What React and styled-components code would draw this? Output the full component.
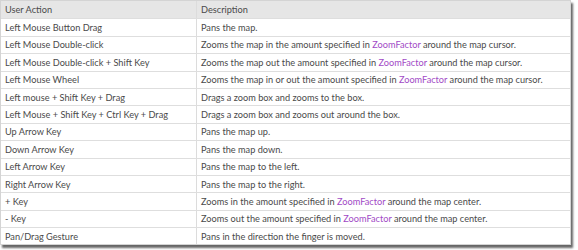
import React from "react";
import styled, { createGlobalStyle } from "styled-components";

const GlobalStyle = createGlobalStyle`
  html, body {
    margin: 0;
    padding: 0;
    background: #ffffff;
  }
`;

const Page = styled.div`
  width: 578px;
  height: 250px;
  overflow: hidden;
`;

const Table = styled.div`
  width: 571px;
  display: flex;
  flex-direction: column;
  border: 1px solid #d4d4d4;
  box-sizing: border-box;
  box-shadow: 2px 3px 2px rgba(0, 0, 0, 0.6);
  font-family: "Lato", "Open Sans", sans-serif;
  font-size: 9.2px;
  color: #4a4a4a;
`;

const Row = styled.div`
  display: grid;
  grid-template-columns: 195px 1fr;
  height: 17.4px;
  box-sizing: border-box;
  background: ${(p) => (p.head ? "#e6e6e6" : "#ffffff")};
  border-top: ${(p) => (p.first ? "none" : "1px solid #dedede")};
`;

const Cell = styled.div`
  display: flex;
  align-items: center;
  padding-left: 4px;
  white-space: nowrap;
  border-left: ${(p) => (p.right ? "1px solid #dcdcdc" : "none")};
`;

const Link = styled.span`
  color: #a24ac6;
`;

const rows = [
  ["Left Mouse Button Drag", "Pans the map."],
  ["Left Mouse Double-click", ["Zooms the map in the amount specified in ", " around the map cursor."]],
  ["Left Mouse Double-click + Shift Key", ["Zooms the map out the amount specified in ", " around the map cursor."]],
  ["Left Mouse Wheel", ["Zooms the map in or out the amount specified in ", " around the map cursor."]],
  ["Left mouse + Shift Key + Drag", "Drags a zoom box and zooms to the box."],
  ["Left Mouse + Shift Key + Ctrl Key + Drag", "Drags a zoom box and zooms out around the box."],
  ["Up Arrow Key", "Pans the map up."],
  ["Down Arrow Key", "Pans the map down."],
  ["Left Arrow Key", "Pans the map to the left."],
  ["Right Arrow Key", "Pans the map to the right."],
  ["+ Key", ["Zooms in the amount specified in ", " around the map center."]],
  ["- Key", ["Zooms out the amount specified in ", " around the map center."]],
  ["Pan/Drag Gesture", "Pans in the direction the finger is moved."],
];

const Description = ({ value }) =>
  Array.isArray(value) ? (
    <span>
      {value[0]}
      <Link>ZoomFactor</Link>
      {value[1]}
    </span>
  ) : (
    <span>{value}</span>
  );

export default function App() {
  return (
    <Page>
      <GlobalStyle />
      <Table>
        <Row head first>
          <Cell>User Action</Cell>
          <Cell right>Description</Cell>
        </Row>
        {rows.map(([action, desc]) => (
          <Row key={action}>
            <Cell>{action}</Cell>
            <Cell right>
              <Description value={desc} />
            </Cell>
          </Row>
        ))}
      </Table>
    </Page>
  );
}
